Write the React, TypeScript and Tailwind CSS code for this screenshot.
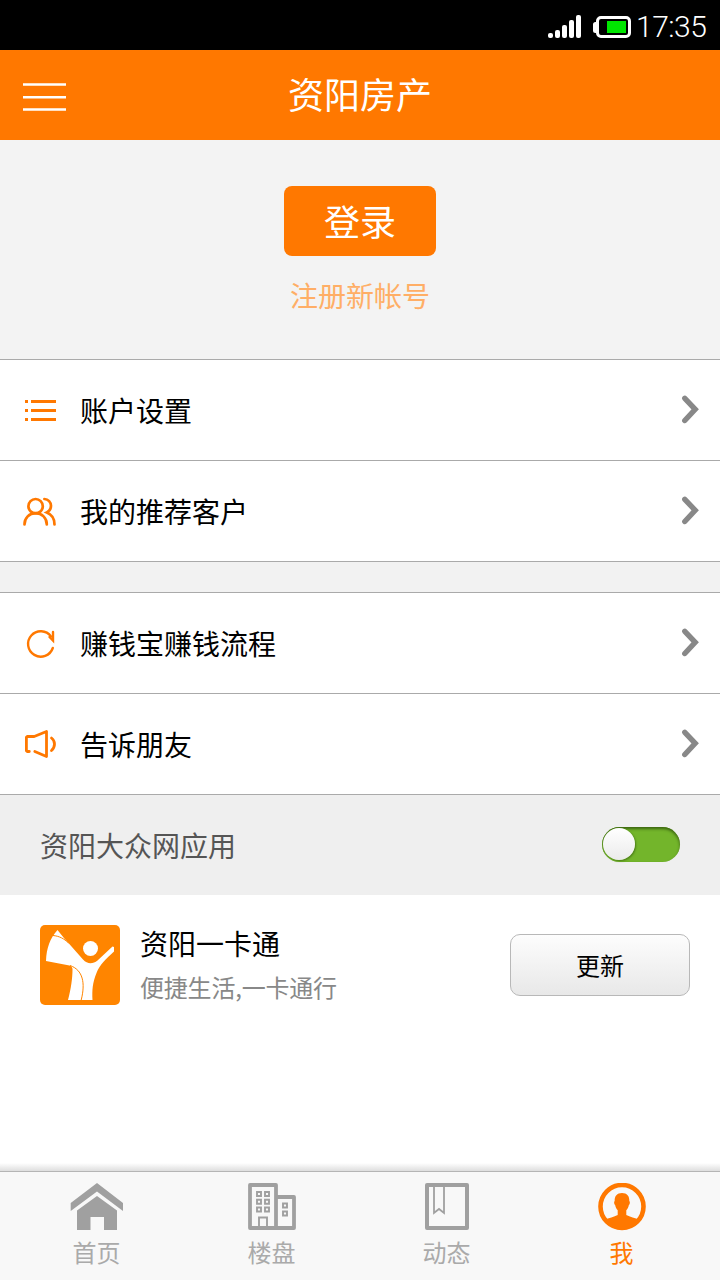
import React, { useState } from 'react';

type TabId = 'home' | 'building' | 'news' | 'me';

interface MenuRowProps {
  icon: React.ReactNode;
  label: string;
}

const SignalIcon = () => (
  <svg width="34" height="24" viewBox="0 0 34 24" fill="#fff">
    <rect x="0" y="19" width="5" height="5" rx="2" />
    <rect x="7" y="16" width="5" height="8" rx="2" />
    <rect x="14" y="11" width="5" height="13" rx="2" />
    <rect x="21" y="6" width="5" height="18" rx="2" />
    <rect x="28" y="1" width="5" height="23" rx="2" />
  </svg>
);

const BatteryIcon = () => (
  <svg width="39" height="24" viewBox="0 0 39 24">
    <path d="M0 9.500a2.500 2.500 0 0 1 2.500-2.500H5v11H2.500A2.500 2.500 0 0 1 0 15.500Z" fill="#fff" />
    <rect x="4.500" y="2.500" width="32" height="19" rx="3.500" fill="#000" stroke="#fff" strokeWidth="3" />
    <rect x="14" y="6" width="19" height="12" fill="#00e600" />
  </svg>
);

const MenuIcon = () => (
  <svg width="43" height="28" viewBox="0 0 43 28" stroke="#fff" strokeWidth="2.400">
    <path d="M0 1.500h43M0 14.300h43M0 26.500h43" />
  </svg>
);

const ListIcon = () => (
  <svg width="40" height="40" viewBox="0 0 40 40" fill="#ff7800">
    <path d="M5 10h3v3H5zM5 19h3v3H5zM5 28h3v3H5zM11 10h25v3H11zM11 19h25v3H11zM11 28h25v3H11z" />
  </svg>
);

const PeopleIcon = () => (
  <svg width="40" height="40" viewBox="0 0 40 40" fill="none" stroke="#ff7800" strokeWidth="2.700" strokeLinecap="round">
    <circle cx="15.600" cy="15.200" r="7.200" />
    <path d="M4.500 33.400c0-6.500 4.800-11.200 11.100-11.200s11.200 4.700 11.200 11.200" />
    <path d="M24.400 8c3.800.1 6.600 3.200 6.600 6.800 0 3-1.700 5.300-4.200 6.600 4.600 1.800 7.700 6.400 7.700 12" />
  </svg>
);

const RefreshIcon = () => (
  <svg width="40" height="40" viewBox="0 0 40 40" fill="none" stroke="#ff7800" strokeWidth="2.400" strokeLinecap="round">
    <path d="M32.800 25A12.700 12.700 0 1 1 31 13.400" />
    <path d="M33 9v8.500L29.500 14" />
  </svg>
);

const SpeakerIcon = () => (
  <svg width="40" height="40" viewBox="0 0 40 40" fill="none" stroke="#ff7800" strokeWidth="2.800" strokeLinecap="round" strokeLinejoin="round">
    <path d="M9.300 27.500H7.200l-.8-.8V13.300l.8-.8h7L26.500 7.500v25l-11.700-5" />
    <path d="M31.500 14c4 3 4 9 0 12.500" />
  </svg>
);

const ChevronIcon = () => (
  <svg width="20" height="32" viewBox="0 0 20 32" fill="none" stroke="#888" strokeWidth="5.400" strokeLinecap="round">
    <path d="M4.800 4.300 15.200 15.300 4.800 26.500" strokeLinejoin="miter" />
  </svg>
);

const AppLogo = () => (
  <svg width="80" height="80" viewBox="0 0 80 80">
    <rect width="80" height="80" rx="5" fill="#ff8500" />
    <path
      d="M17.500 5C26 16 35 25 43 34.500c4.500 5 10 4.500 14.500 1L72.500 21.500l1.500.5v4.500C66 34 60 39 56.500 48c-4 10-4.500 17-4 27H28c3-11 4.500-22 4.500-30.500 0-2-1-3.500-3-4L6 36C6.500 23 10 13.500 17.500 5Z"
      fill="#fff"
    />
    <circle cx="50.500" cy="23.500" r="7.500" fill="#fff" />
    <path d="M13 10.500c6 .5 11 3 15.500 7.500M30 40.500C43 45 45.500 58 41.200 75" fill="none" stroke="#ff8500" strokeWidth="1" />
  </svg>
);

const HomeIcon = ({ color }: { color: string }) => (
  <svg width="54" height="48" viewBox="0 0 54 48" fill={color}>
    <path d="M27 0 53 20v8L27 8.500.700 28v-8Z" />
    <path d="M27 13 47 27.500V47H34V34H20.500v13H7V27.500Z" />
  </svg>
);

const BuildingIcon = ({ color }: { color: string }) => (
  <svg width="48" height="48" viewBox="0 0 48 48" fill="none" stroke={color}>
    <path d="M2 2h26v43H2ZM28 14h18v31H28" strokeWidth="3.800" strokeLinejoin="round" />
    <path
      d="M9 9h4v4H9zM17 9h4v4h-4zM9 16.700h4v4H9zM17 16.700h4v4h-4zM9 24.500h4v4H9zM17 24.500h4v4h-4zM35 20.500h4v4h-4zM35 28.500h4v4h-4zM11 45V34.500h8V45"
      strokeWidth="1.900"
    />
  </svg>
);

const BookIcon = ({ color }: { color: string }) => (
  <svg width="44" height="48" viewBox="0 0 44 48" fill="none" stroke={color}>
    <rect x="2" y="2" width="40" height="43" strokeWidth="4" strokeLinejoin="round" />
    <path d="M9 3v27l5-4 5 4V3" strokeWidth="1.800" />
  </svg>
);

const MeIcon = ({ color }: { color: string }) => (
  <svg width="48" height="48" viewBox="0 0 48 48">
    <circle cx="24" cy="23.500" r="21.500" fill="none" stroke={color} strokeWidth="4.600" />
    <path
      d="M24 10c5 0 7.600 3 7.300 8 1 .5.700 3.500-.5 4.300-.4 2.200-1.200 3.600-2.500 5V32c3.500 2.200 9 2.500 13 5.200C37 43.500 31 46.500 24 46.500S11 43.500 6.700 37.200c4-2.700 9.500-3 13-5.200v-4.700c-1.300-1.400-2.100-2.800-2.500-5-1.200-.8-1.500-3.800-.5-4.300-.3-5 2.300-8 7.300-8Z"
      fill={color}
    />
  </svg>
);

const MenuRow: React.FC<MenuRowProps> = ({ icon, label }) => (
  <button className="flex h-[101px] w-full items-center border-b border-[#aaa] bg-white pr-5 pl-5 text-left">
    {icon}
    <span className="ml-5 flex-1 text-[28px] leading-10 text-black">{label}</span>
    <ChevronIcon />
  </button>
);

const tabs: { id: TabId; label: string; Icon: React.FC<{ color: string }> }[] = [
  { id: 'home', label: '首页', Icon: HomeIcon },
  { id: 'building', label: '楼盘', Icon: BuildingIcon },
  { id: 'news', label: '动态', Icon: BookIcon },
  { id: 'me', label: '我', Icon: MeIcon },
];

export default function App() {
  const [activeTab, setActiveTab] = useState<TabId>('me');
  const [showApps, setShowApps] = useState(false);

  return (
    <div className="flex h-[1280px] w-[720px] flex-col overflow-hidden bg-white font-['Noto_Sans_CJK_SC',sans-serif]">
      {/* Status bar */}
      <div className="flex h-[50px] shrink-0 items-center justify-end bg-black pr-3">
        <div className="pt-[2px]"><SignalIcon /></div>
        <div className="ml-[11px] pt-[3px]"><BatteryIcon /></div>
        <span className="ml-[4px] w-[72px] pt-[3px] font-['Roboto',sans-serif] text-[30px] leading-[50px] font-light tracking-[-0.5px] text-white">17:35</span>
      </div>

      {/* Header */}
      <header className="grid h-[90px] shrink-0 grid-cols-[1fr_auto_1fr] items-center bg-[#ff7800] px-[23px]">
        <button className="w-[43px] pt-[4px]">
          <MenuIcon />
        </button>
        <h1 className="pb-[3px] text-[36px] leading-[87px] text-white">资阳房产</h1>
      </header>

      {/* Login */}
      <div className="flex h-[220px] shrink-0 flex-col items-center border-b border-[#aaa] bg-[#f3f3f3] pt-[46px]">
        <button className="h-[70px] w-[152px] rounded-[8px] bg-[#ff7800] pb-[2px] text-[36px] leading-[68px] text-white">登录</button>
        <a className="mt-[19px] text-[28px] leading-10 text-[#ffae66]">注册新帐号</a>
      </div>

      <MenuRow icon={<ListIcon />} label="账户设置" />
      <MenuRow icon={<PeopleIcon />} label="我的推荐客户" />
      <div className="h-[31px] shrink-0 border-b border-[#aaa] bg-[#f2f2f2]" />
      <MenuRow icon={<RefreshIcon />} label="赚钱宝赚钱流程" />
      <MenuRow icon={<SpeakerIcon />} label="告诉朋友" />

      {/* App switch */}
      <div className="flex h-[100px] shrink-0 items-center justify-between bg-[#efefef] px-10">
        <span className="text-[28px] leading-10 text-[#555]">资阳大众网应用</span>
        <button
          onClick={() => setShowApps(!showApps)}
          className={`mb-[2px] flex h-[35px] w-[78px] items-center rounded-full bg-[#73b52b] px-[1px] shadow-[inset_0_2px_3px_#3b6410] ${showApps ? 'justify-end' : 'justify-start'}`}
        >
          <span className="h-[32px] w-[32px] rounded-full bg-gradient-to-b from-white to-[#ebebeb] shadow-[1px_1px_2px_#4a7c18]" />
        </button>
      </div>

      <div className="flex h-[140px] shrink-0 items-center pr-[30px] pl-10">
        <AppLogo />
        <div className="ml-5 flex-1">
          <div className="text-[28px] leading-[44px] text-black">资阳一卡通</div>
          <div className="text-[24px] leading-[44px] tracking-[-0.2px] text-[#888]">便捷生活,一卡通行</div>
        </div>
        <button className="h-[62px] w-[180px] rounded-[10px] border border-[#b8b8b8] bg-gradient-to-b from-[#fdfdfd] to-[#e8e8e8] text-[24px] text-black">
          更新
        </button>
      </div>

      {/* Bottom tabs */}
      <div className="mt-auto h-2 shrink-0 bg-gradient-to-b from-white to-[#dedede]" />
      <nav className="grid h-[109px] shrink-0 grid-cols-4 border-t border-[#b5b5b5] bg-[#f8f8f8] pr-[11px] pl-[9px]">
        {tabs.map(({ id, label, Icon }) => {
          const active = id === activeTab;
          return (
            <button key={id} onClick={() => setActiveTab(id)} className="flex flex-col items-center pt-[11px]">
              <Icon color={active ? '#ff7800' : '#a0a0a0'} />
              <span className={`mt-[3px] text-[24px] leading-9 ${active ? 'text-[#ff7800]' : 'text-[#aaa]'}`}>{label}</span>
            </button>
          );
        })}
      </nav>
    </div>
  );
}
